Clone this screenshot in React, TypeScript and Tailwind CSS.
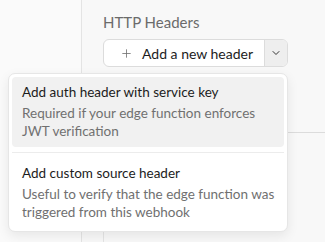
import { ChevronDown, Plus } from "lucide-react";

const options = [
  {
    title: "Add auth header with service key",
    desc: "Required if your edge function enforces JWT verification",
    active: true,
  },
  {
    title: "Add custom source header",
    desc: "Useful to verify that the edge function was triggered from this webhook",
    active: false,
  },
];

export default function App() {
  return (
    <div className="relative h-[242px] w-[325px] overflow-hidden bg-[#f8f8f8] font-['Lato',sans-serif]">
      <div className="flex h-full">
        {/* left rail */}
        <div className="w-[82px] shrink-0 border-r border-[#e4e4e4] bg-[#fafafa]" />
        <div className="flex flex-1 flex-col">
          <div className="flex-1" />
          <div className="flex h-[40px]">
            <div className="w-[22px] shrink-0 border-r border-[#e4e4e4]" />
            <div className="flex-1" />
          </div>
        </div>
      </div>

      {/* main content */}
      <div className="absolute left-[103px] top-[12px] flex flex-col">
        <h3 className="text-[15px] leading-[20px] text-[#6b6b6b]">HTTP Headers</h3>
        <div className="mt-[7px] flex h-[28px] w-[185px] overflow-hidden rounded-[6px] border border-[#dcdcdc] bg-white">
          <button className="flex w-[160px] items-center gap-[9px] pl-[16px] text-[14px] text-[#1c1c1c]">
            <Plus className="h-[13px] w-[13px] text-[#707070]" strokeWidth={1.5} />
            Add a new header
          </button>
          <button className="flex flex-1 items-center justify-center border-l border-[#dcdcdc] bg-[#eeeeee]">
            <ChevronDown className="h-[12px] w-[12px] text-[#333]" strokeWidth={2} />
          </button>
        </div>
      </div>

      <div className="absolute left-[288px] right-0 top-[132px] border-t border-[#dcdcdc]" />

      {/* dropdown menu */}
      <div className="absolute left-[8px] top-[73px] w-[280px] rounded-[7px] border border-[#e6e6e6] bg-white p-[3px] shadow-[0_4px_12px_rgba(0,0,0,0.08)]">
        {options.map((o, i) => (
          <div key={o.title}>
            {i > 0 && <div className="my-[5px] border-t border-[#ececec]" />}
            <div
              className={`rounded-[4px] pb-[7px] pl-[10px] pr-[4px] pt-[6px] ${o.active ? "bg-[#f1f1f1]" : ""}`}
            >
              <p className="text-[13.5px] leading-[18px] text-[#1c1c1c]">{o.title}</p>
              <p className="mt-[3px] text-[13.5px] leading-[18px] text-[#707070]">{o.desc}</p>
            </div>
          </div>
        ))}
      </div>
    </div>
  );
}
